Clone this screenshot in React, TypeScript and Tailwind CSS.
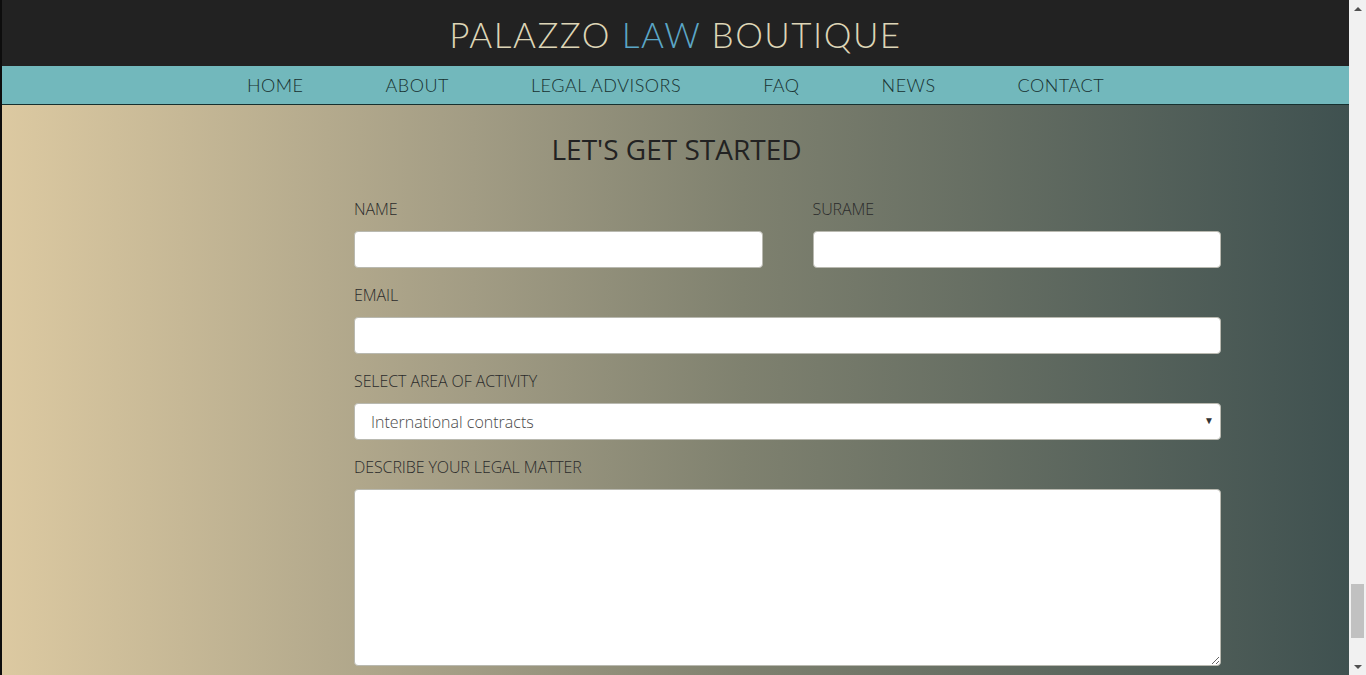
import React from 'react'

const navItems = ['HOME', 'ABOUT', 'LEGAL ADVISORS', 'FAQ', 'NEWS', 'CONTACT']

const Label: React.FC<{ text: string }> = ({ text }) => (
  <label className="block text-[16px] leading-[22px] font-light text-[#2b2b2b] mb-[11px] tracking-[-0.1px]">{text}</label>
)

const inputCls = 'block w-full h-[37px] bg-white border border-[#b9b9b0] rounded-[4px] outline-none'

const Scrollbar = () => (
  <div className="w-[17px] h-full bg-[#f1f1f1] flex flex-col items-center">
    <div className="h-[17px] flex items-center justify-center">
      <div className="w-0 h-0 border-l-[4px] border-r-[4px] border-b-[4px] border-l-transparent border-r-transparent border-b-[#505050]" />
    </div>
    <div className="h-[567px]" />
    <div className="w-[13px] h-[54px] bg-[#c1c1c1]" />
    <div className="flex-1" />
    <div className="h-[17px] flex items-center justify-center">
      <div className="w-0 h-0 border-l-[4px] border-r-[4px] border-t-[4px] border-l-transparent border-r-transparent border-t-[#505050]" />
    </div>
  </div>
)

export default function App() {
  return (
    <div className="flex w-[1366px] h-[675px] overflow-hidden font-['Open_Sans',sans-serif]">
      <div className="flex-1 flex flex-col border-l-2 border-[#0d0d0d]">
        <header className="h-[66px] bg-[#222222] flex items-center justify-center">
          <h1 className="font-['Lato',sans-serif] font-light text-[35px] leading-none tracking-[1.5px] text-[#ddd5b6] mt-[2px]">
            PALAZZO <span className="text-[#5ba6c6]">LAW</span> BOUTIQUE
          </h1>
        </header>
        <nav className="h-[39px] bg-[#72b8bc] border-b border-[#16302f] flex items-center justify-center gap-[82px]">
          {navItems.map((item) => (
            <a key={item} className="font-['Lato',sans-serif] font-light text-[18px] tracking-[0.5px] text-[#17302f] leading-none">
              {item}
            </a>
          ))}
        </nav>
        <main className="flex-1 bg-[linear-gradient(to_right,#dcc9a1,#a29c84_35%,#7f816f_55%,#3f5150)]">
          <h2 className="text-center text-[28px] leading-[38px] text-[#222] pt-[25px] pl-[2px]">LET'S GET STARTED</h2>
          <form className="ml-[352px] w-[867px] mt-[30px]">
            <div className="flex gap-[50px] mb-[16px]">
              <div className="flex-1">
                <Label text="NAME" />
                <input className={inputCls} />
              </div>
              <div className="flex-1">
                <Label text="SURAME" />
                <input className={inputCls} />
              </div>
            </div>
            <div className="mb-[16px]">
              <Label text="EMAIL" />
              <input className={inputCls} />
            </div>
            <div className="mb-[16px]">
              <Label text="SELECT AREA OF ACTIVITY" />
              <div className="relative">
                <select className={`${inputCls} appearance-none pl-4 text-[16px] font-light text-[#4a4a4a]`} defaultValue="International contracts">
                  <option>International contracts</option>
                  <option>Corporate law</option>
                  <option>Real estate</option>
                </select>
                <span className="absolute right-[7px] top-[10px] text-[10px] text-[#333] pointer-events-none">▼</span>
              </div>
            </div>
            <div>
              <Label text="DESCRIBE YOUR LEGAL MATTER" />
              <textarea className="block w-full h-[177px] bg-white border border-[#b9b9b0] rounded-[4px] outline-none" />
            </div>
          </form>
        </main>
      </div>
      <Scrollbar />
    </div>
  )
}
